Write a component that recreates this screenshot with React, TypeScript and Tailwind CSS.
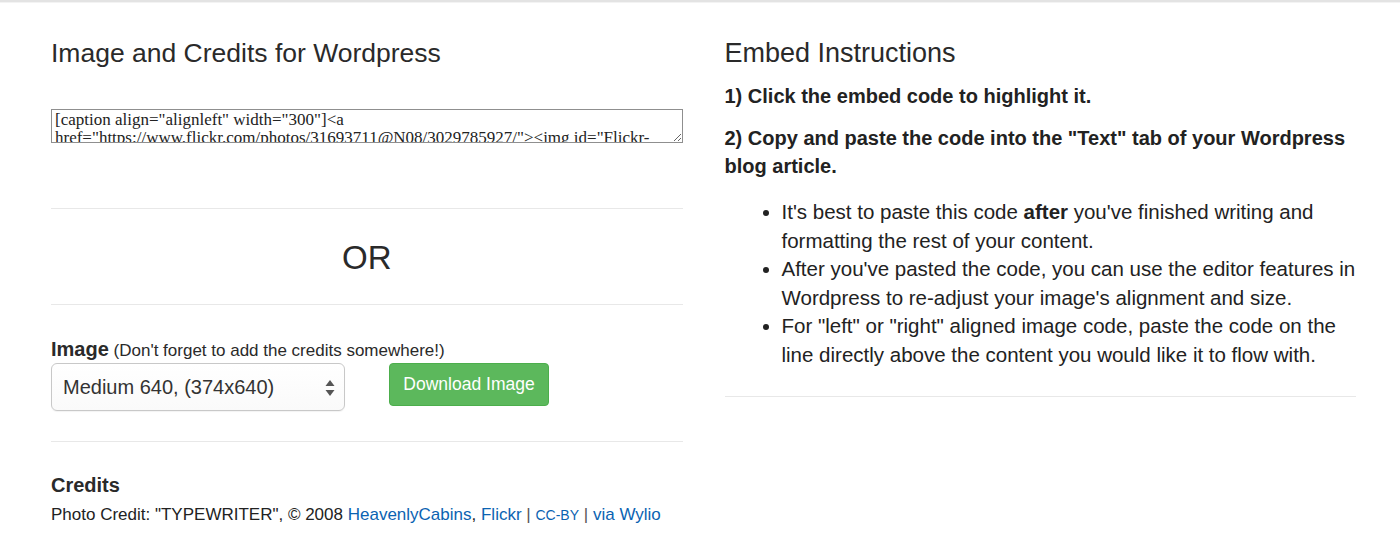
import React from "react";

const embedCode =
  '[caption align="alignleft" width="300"]<a href="https://www.flickr.com/photos/31693711@N08/3029785927/"><img id="Flickr-3029785927" src="https://farm4.staticflickr.com/3184/3029785927_2d3f4c1f1c.jpg" alt="TYPEWRITER" width="300" /></a> Photo Credit: <a href="https://www.flickr.com/photos/31693711@N08/3029785927/">HeavenlyCabins</a>[/caption]';

export default function App() {
  return (
    <div
      className="min-h-[541px] w-full bg-white text-[#333]"
      style={{ fontFamily: '"Liberation Sans", Arial, Helvetica, sans-serif' }}
    >
      <div className="h-[3px] w-full border-t-2 border-[#e3e3e3] bg-[#f3f3f3]" />
      <div className="grid grid-cols-2 gap-x-[42px] pl-[51px] pr-[44px]">
        {/* Left column */}
        <div>
          <h3 className="mt-[32px] text-[26.5px] leading-[36px] font-normal text-[#2a2a2a]">
            Image and Credits for Wordpress
          </h3>
          <textarea
            readOnly
            value={embedCode}
            className="mt-[38px] block h-[34px] w-full resize-y overflow-hidden border border-[#8f8f8f] px-[3px] py-[1px] text-[17px] leading-[18px] text-[#222] outline-none"
            style={{ fontFamily: '"Liberation Serif", "Times New Roman", serif' }}
          />
          <div className="mt-[65px] border-t border-[#e8e8e8]" />
          <div className="pt-[29px] pb-[26px] text-center text-[33px] leading-[40px] text-[#2a2a2a]">OR</div>
          <div className="border-t border-[#e8e8e8]" />
          <div className="mt-[33px] text-[17px] leading-[22px]">
            <span className="text-[20px] font-bold text-[#2a2a2a]">Image</span>{" "}
            <span className="text-[#2a2a2a]">(Don't forget to add the credits somewhere!)</span>
          </div>
          <div className="mt-[1px] flex items-start gap-[44px]">
            <div className="relative h-[48px] w-[294px] rounded-[6px] border border-[#c8c8c8] bg-gradient-to-b from-white to-[#fafafa] shadow-[0_1px_1px_rgba(0,0,0,0.05)]">
              <div className="flex h-full items-center pl-[11px] text-[20px] text-[#333]">
                Medium 640, (374x640)
              </div>
              <svg
                className="absolute right-[9px] top-[16px]"
                width="10"
                height="16"
                viewBox="0 0 10 16"
              >
                <path d="M5 0 L9.5 6 L0.5 6 Z" fill="#555" />
                <path d="M5 16 L9.5 10 L0.5 10 Z" fill="#555" />
              </svg>
            </div>
            <button className="h-[43px] w-[160px] rounded-[4px] border border-[#4cae4c] bg-[#5cb85c] text-[17.5px] text-white">
              Download Image
            </button>
          </div>
          <div className="mt-[30px] border-t border-[#e8e8e8]" />
          <div className="mt-[31px] text-[20px] leading-[24px] font-bold text-[#2a2a2a]">Credits</div>
          <div className="mt-[6px] text-[17px] leading-[24px] text-[#222]">
            Photo Credit: "TYPEWRITER", © 2008{" "}
            <a className="text-[#0b63b2]">HeavenlyCabins</a>,{" "}
            <a className="text-[#0b63b2]">Flickr</a>{" "}
            <span className="text-[#555]">|</span>{" "}
            <a className="text-[14px] text-[#0b63b2]">CC-BY</a>{" "}
            <span className="text-[#555]">|</span>{" "}
            <a className="text-[#0b63b2]">via Wylio</a>
          </div>
        </div>

        {/* Right column */}
        <div>
          <h3 className="mt-[32px] text-[27px] leading-[36px] font-normal text-[#2a2a2a]">
            Embed Instructions
          </h3>
          <p className="mt-[11px] text-[20px] leading-[28px] font-bold text-[#222]">
            1) Click the embed code to highlight it.
          </p>
          <p className="mt-[14px] text-[20px] leading-[28px] font-bold text-[#222]">
            2) Copy and paste the code into the "Text" tab of your Wordpress blog article.
          </p>
          <ul className="mt-[18px] list-disc pl-[57px] text-[20.5px] leading-[28.5px] text-[#222]">
            <li>
              It's best to paste this code <b>after</b> you've finished writing and formatting
              the rest of your content.
            </li>
            <li>
              After you've pasted the code, you can use the editor features in Wordpress to
              re-adjust your image's alignment and size.
            </li>
            <li>
              For "left" or "right" aligned image code, paste the code on the line directly
              above the content you would like it to flow with.
            </li>
          </ul>
          <div className="mt-[27px] border-t border-[#e8e8e8]" />
        </div>
      </div>
    </div>
  );
}
